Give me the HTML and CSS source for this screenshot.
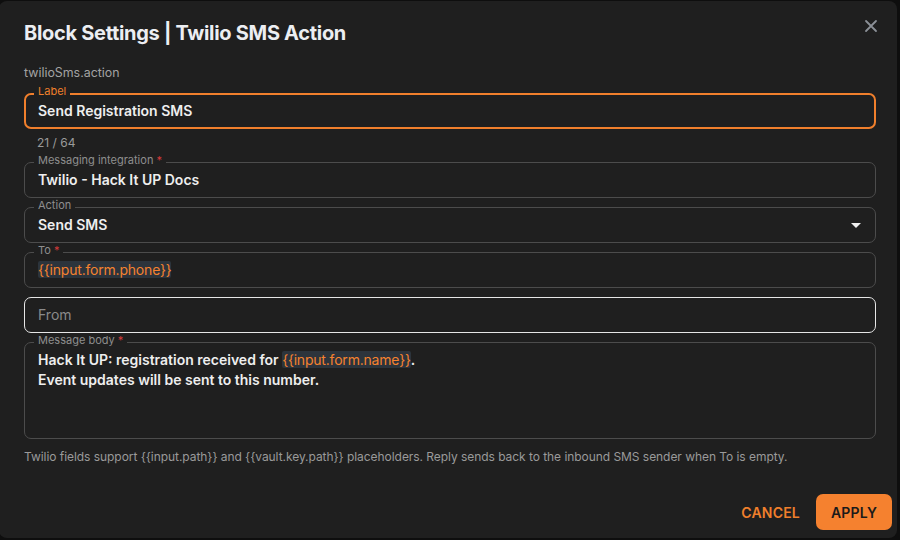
FILE: index.html
```html
<!DOCTYPE html>
<html lang="en">
<head>
<meta charset="utf-8">
<title>Block Settings</title>
<link rel="stylesheet" href="styles.css">
</head>
<body>
<div class="backdrop">
  <div class="dialog">
    <button class="close" aria-label="Close">
      <svg width="14" height="14" viewBox="0 0 14 14"><path d="M2 2 L12 12 M12 2 L2 12" stroke="#8b9097" stroke-width="1.8" stroke-linecap="round"/></svg>
    </button>
    <h1 class="title">Block Settings | Twilio SMS Action</h1>
    <div class="type">twilioSms.action</div>

    <div class="field focused">
      <span class="notch">Label</span>
      <div class="value">Send Registration SMS</div>
    </div>
    <div class="counter">21 / 64</div>

    <div class="stack">
      <div class="field">
        <span class="notch">Messaging integration <span class="req">*</span></span>
        <div class="value">Twilio - Hack It UP Docs</div>
      </div>
      <div class="field">
        <span class="notch">Action</span>
        <div class="value">Send SMS</div>
        <span class="caret"></span>
      </div>
      <div class="field">
        <span class="notch">To <span class="req">*</span></span>
        <div class="value"><span class="token">{{input.form.phone}}</span></div>
      </div>
      <div class="field hover">
        <div class="value placeholder">From</div>
      </div>
      <div class="field multi">
        <span class="notch">Message body <span class="req">*</span></span>
        <div class="value">Hack It UP: registration received for <span class="token">{{input.form.name}}</span>.<br>Event updates will be sent to this number.</div>
      </div>
    </div>

    <p class="help">Twilio fields support {{input.path}} and {{vault.key.path}} placeholders. Reply sends back to the inbound SMS sender when To is empty.</p>

    <div class="actions">
      <button class="btn text">CANCEL</button>
      <button class="btn primary">APPLY</button>
    </div>
  </div>
</div>
</body>
</html>
```
FILE: styles.css
```css
* { box-sizing: border-box; }
html, body { margin: 0; padding: 0; }
body {
  background: #0e0e0e;
  font-family: Inter, "Noto Sans", sans-serif;
  width: 900px;
  height: 540px;
  overflow: hidden;
}
.backdrop { padding-top: 1px; }
.dialog {
  position: relative;
  width: 898px;
  height: 537px;
  margin-left: -1px;
  background: #1f1f1f;
  border-radius: 8px;
  padding: 18px 21px 8px 25px;
  display: flex;
  flex-direction: column;
}
.close {
  position: absolute;
  top: 17px;
  right: 18px;
  background: none;
  border: 0;
  padding: 0;
  width: 16px;
  height: 16px;
  display: flex;
  align-items: center;
  justify-content: center;
}
.title {
  margin: 0;
  font-size: 20px;
  line-height: 28px;
  font-weight: 700;
  color: #eceef2;
  letter-spacing: -0.3px;
}
.type {
  margin-top: 18px;
  font-size: 12.4px;
  line-height: 16px;
  color: #a3a3a3;
}
.field {
  position: relative;
  height: 36px;
  border: 1px solid #4c4c4c;
  border-radius: 7px;
  padding: 0 13px;
  display: flex;
  align-items: center;
}
.field.focused {
  margin-top: 12px;
  border: 2px solid #f07f2c;
  padding: 0 12px;
}
.field.hover { border-color: #e6e6e6; }
.field.multi {
  height: 97px;
  align-items: flex-start;
  padding-top: 7px;
}
.notch {
  position: absolute;
  top: -9px;
  left: 9px;
  padding: 0 4px;
  background: #1f1f1f;
  font-size: 11px;
  line-height: 12px;
  color: #8e8e8e;
}
.focused .notch { left: 8px; top: -10px; color: #f07f2c; }
.req { color: #d63a3a; }
.value {
  font-size: 14px;
  line-height: 20px;
  font-weight: 600;
  color: #eeeeee;
}
.placeholder { font-weight: 400; color: #8a8a8a; }
.token {
  color: #f5822f;
  background: #2c343c;
  border-radius: 2px;
  font-weight: 400;
  letter-spacing: -0.2px;
}
.caret {
  position: absolute;
  right: 14px;
  top: 15px;
  width: 0;
  height: 0;
  border-left: 5px solid transparent;
  border-right: 5px solid transparent;
  border-top: 5px solid #f0f0f0;
}
.counter {
  margin: 6px 0 11px 13px;
  font-size: 12px;
  line-height: 16px;
  color: #9a9a9a;
}
.stack {
  display: flex;
  flex-direction: column;
  gap: 9px;
}
.help {
  margin: 11px 0 0 0;
  font-size: 12px;
  line-height: 14px;
  color: #9a9a9a;
  letter-spacing: -0.05px;
  white-space: nowrap;
}
.actions {
  margin-top: auto;
  display: flex;
  justify-content: flex-end;
  align-items: center;
  gap: 16px;
  margin-right: -16px;
}
.btn {
  font-family: inherit;
  font-size: 14px;
  font-weight: 600;
  border: 0;
  cursor: pointer;
  letter-spacing: 0.2px;
}
.btn.text {
  background: none;
  color: #f07f2c;
  padding: 0;
}
.btn.primary {
  background: #f5812f;
  color: #1a1a1a;
  width: 76px;
  height: 36px;
  border-radius: 7px;
}
```
